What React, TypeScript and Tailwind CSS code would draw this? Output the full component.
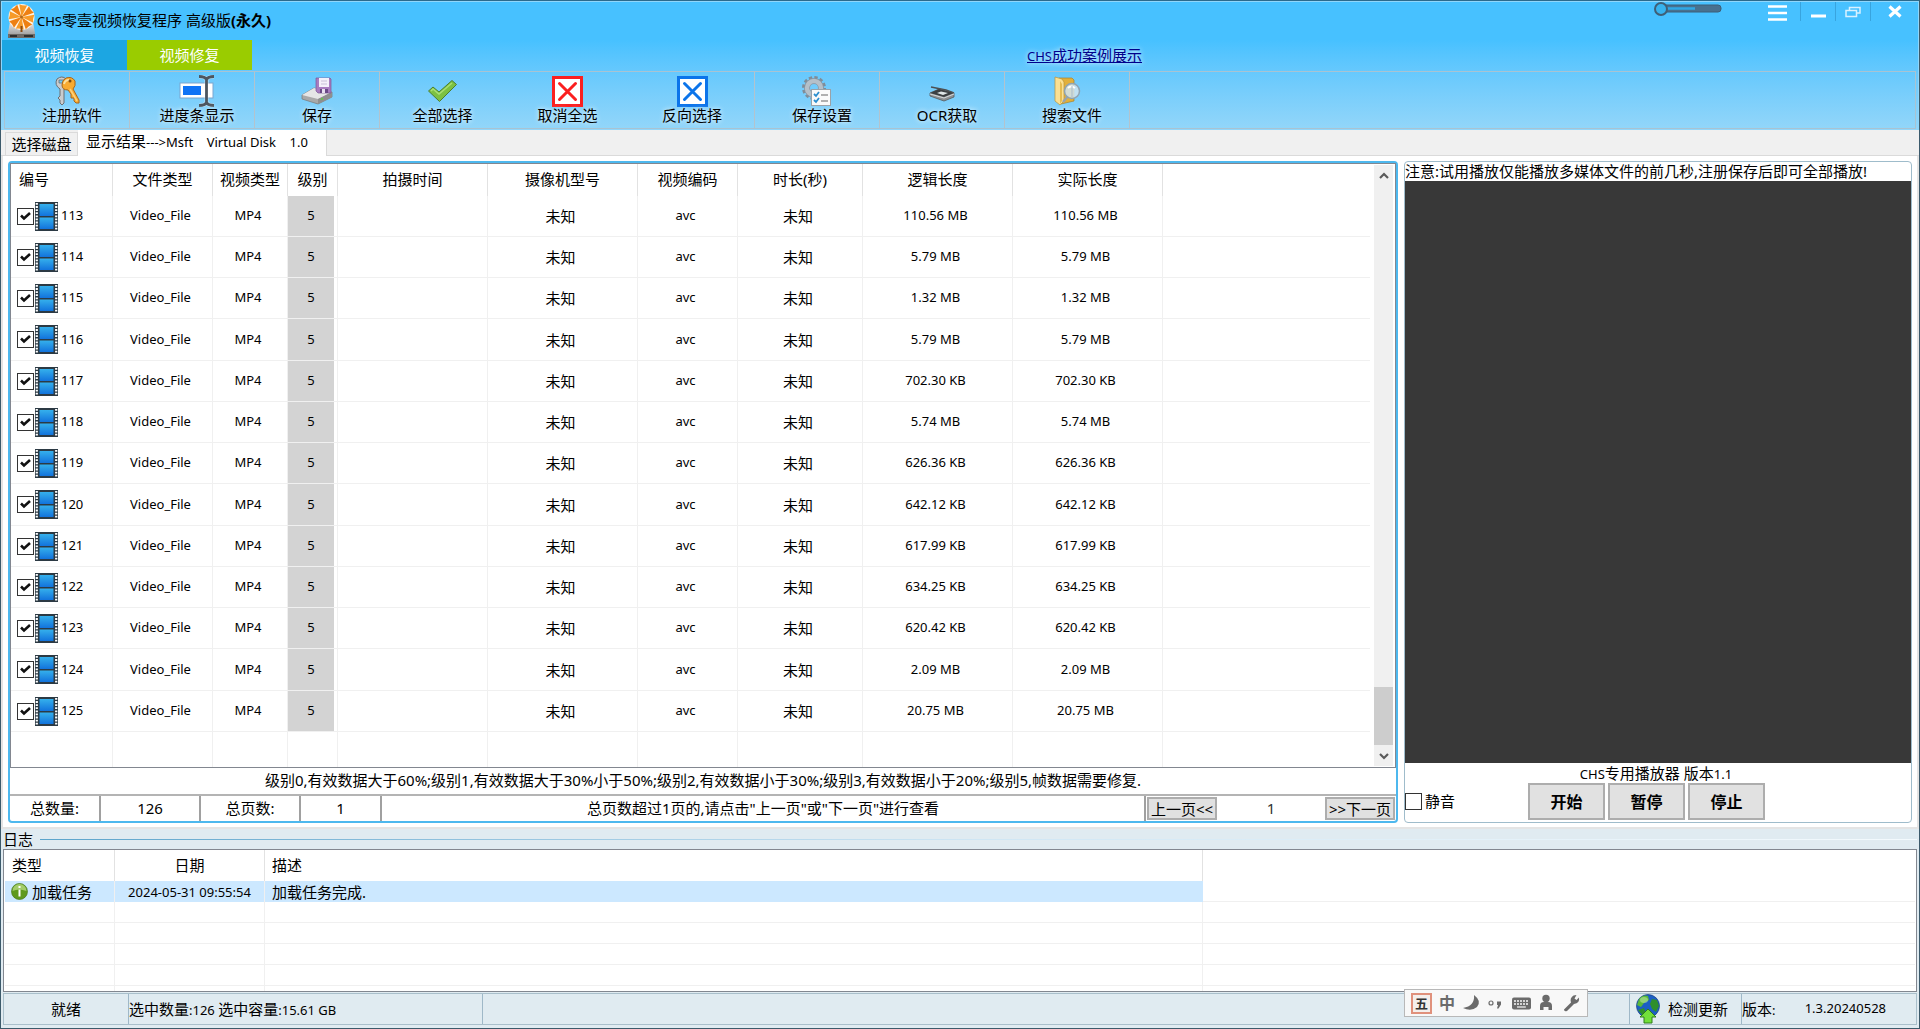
import type { ReactNode } from "react";

type Row = { id: number; size: string };

const ROWS: Row[] = [
  { id: 113, size: "110.56 MB" },
  { id: 114, size: "5.79 MB" },
  { id: 115, size: "1.32 MB" },
  { id: 116, size: "5.79 MB" },
  { id: 117, size: "702.30 KB" },
  { id: 118, size: "5.74 MB" },
  { id: 119, size: "626.36 KB" },
  { id: 120, size: "642.12 KB" },
  { id: 121, size: "617.99 KB" },
  { id: 122, size: "634.25 KB" },
  { id: 123, size: "620.42 KB" },
  { id: 124, size: "2.09 MB" },
  { id: 125, size: "20.75 MB" },
];

function Latin({ children }: { children: ReactNode }) {
  return <span className="text-[13px]">{children}</span>;
}

function LogoIcon() {
  const wedges = [0, 1, 2, 3, 4, 5, 6, 7];
  return (
    <svg width="29" height="37" viewBox="0 0 29 37" aria-hidden="true">
      <defs>
        <linearGradient id="drive" x1="0" y1="0" x2="0" y2="1">
          <stop offset="0" stopColor="#e8e8e8" />
          <stop offset="1" stopColor="#8f8f8f" />
        </linearGradient>
      </defs>
      <path d="M3 20 L26 20 L28 31 L28 36 L1 36 L1 31Z" fill="url(#drive)" />
      <path d="M1 32H28V36H1Z" fill="#6f6a66" />
      <path d="M3 34h7M17 34h9" stroke="#2f2f2f" strokeWidth="2" />
      <g transform="translate(14.5 15)">
        <circle r="13" fill="#fff4e4" />
        {wedges.map((i) => (
          <path
            key={i}
            d="M0 0 L-4 -12.4 Q0 -11.2 4 -12.4Z"
            transform={`rotate(${i * 45 + 8})`}
            fill={i % 2 ? "#ee8012" : "#f79a28"}
          />
        ))}
        <circle r="1.5" fill="#b06a1a" />
        <path d="M0 9v6" stroke="#8a4a10" strokeWidth="2" />
      </g>
    </svg>
  );
}

function KeysIcon() {
  return (
    <svg width="28" height="30" viewBox="0 0 28 30" aria-hidden="true">
      <path
        d="M4 3 Q9 -1 13 3 L14 8 Q13 12 11 13 L11 27 L9 29 L7 27 L7 24 L5 22 L7 20 L7 13 Q1 9 4 3Z"
        fill="#c9ccce"
        stroke="#6b6f73"
      />
      <path d="M6 4h5v3H6z" fill="#6bc8fb" stroke="#6b6f73" strokeWidth="0.8" />
      <path
        d="M13 2 Q19 0 22 5 Q23 10 20 13 L26 24 L26 27 L23 27 L21 25 L21 22 L18 22 L18 18 L15 14 Q9 14 9 9 Q9 4 13 2Z"
        fill="#f8ab32"
        stroke="#a8671a"
      />
      <path d="M11 8 Q12 4 16 4" stroke="#fde0a0" strokeWidth="2" fill="none" />
      <circle cx="17" cy="5" r="1.5" fill="#7a4a12" />
      <path d="M17 13 L24 25" stroke="#fcd27c" strokeWidth="1.5" />
    </svg>
  );
}

function ProgressIcon() {
  return (
    <svg width="45" height="32" viewBox="-9 0 45 32" aria-hidden="true">
      <rect x="1" y="8" width="33" height="15" fill="#fff" stroke="#7aa6cf" />
      <rect x="4" y="11" width="18" height="9" fill="#0f73f5" />
      <path
        d="M20 1.500 Q26 1.500 27.500 4.500 Q29 1.500 35 1.500 M27.500 4V28 M20 30.500 Q26 30.500 27.500 27.500 Q29 30.500 35 30.500"
        stroke="#fff"
        strokeWidth="4"
        fill="none"
        opacity="0.5"
      />
      <path
        d="M20 1.500 Q26 1.500 27.500 4.500 Q29 1.500 35 1.500 M27.500 4V28 M20 30.500 Q26 30.500 27.500 27.500 Q29 30.500 35 30.500"
        stroke="#4d565f"
        strokeWidth="2.8"
        fill="none"
      />
    </svg>
  );
}

function SaveIcon() {
  return (
    <svg width="32" height="28" viewBox="0 0 32 28" aria-hidden="true">
      <path d="M1 18 L13 11 L31 15 L31 20 L17 27 L1 22Z" fill="#a9a9a9" stroke="#777" strokeWidth="0.7" />
      <path d="M1 18 L13 11 L31 15 L17 22Z" fill="#e6e6e6" />
      <path d="M17 22 L31 15 V20 L17 27Z" fill="#8f8f8f" />
      <circle cx="21" cy="22" r="1" fill="#5ad23a" />
      <path d="M15 1 H29 L30 2 V16 H17 L15 14Z" fill="#a87cc0" stroke="#7b5796" strokeWidth="0.7" />
      <rect x="18" y="1" width="10" height="9" fill="#f4f0fa" />
      <path d="M20 4h6M20 7h6" stroke="#c9c0d8" />
      <rect x="19" y="12" width="8" height="4" fill="#6a4a86" />
      <rect x="21" y="12" width="3" height="4" fill="#e8dff0" />
    </svg>
  );
}

function CheckIcon() {
  return (
    <svg width="31" height="24" viewBox="0 0 31 24" aria-hidden="true">
      <path
        d="M1.500 12 L6 8 L12 13 L25 1.500 L29.500 5.500 L12.500 22.500Z"
        fill="#7cc142"
        stroke="#4b7f2e"
        strokeLinejoin="round"
      />
      <path d="M4 12 L6 10 L12 15 L25 4" stroke="#a9df72" strokeWidth="1.5" fill="none" />
    </svg>
  );
}

function BoxXIcon({ color }: { color: string }) {
  return (
    <svg width="31" height="31" viewBox="0 0 31 31" aria-hidden="true">
      <rect x="1.500" y="1.500" width="28" height="28" fill="#fff" stroke={color} strokeWidth="3" />
      <path
        d="M7.500 7.500 L23.500 23.500 M23.500 7.500 L7.500 23.500"
        stroke={color}
        strokeWidth="3"
        strokeLinecap="round"
      />
    </svg>
  );
}

function SettingsIcon() {
  return (
    <svg width="30" height="30" viewBox="0 0 30 30" aria-hidden="true">
      <circle cx="12" cy="12" r="10.5" fill="none" stroke="#7f8d99" strokeWidth="3" strokeDasharray="3.3 2.2" />
      <circle cx="12" cy="12" r="7" fill="none" stroke="#8593a0" strokeWidth="6" />
      <circle cx="12" cy="12" r="7" fill="none" stroke="#b5c0c9" strokeWidth="4.5" />
      <rect x="9.500" y="13.500" width="19" height="16" fill="#fafafa" stroke="#9aa2a8" />
      <path d="M12 18 l2 2 l3 -4 M12 24 l2 2 l3 -4" stroke="#2b8fd0" strokeWidth="1.8" fill="none" />
      <path d="M19 19h7M19 25h7" stroke="#b0b0b0" strokeWidth="1.8" />
    </svg>
  );
}

function ScannerIcon() {
  return (
    <svg width="26" height="22" viewBox="0 -6 26 22" aria-hidden="true">
      <path d="M2 1 L17 4 L25 7" stroke="#4b4f52" strokeWidth="1.5" fill="none" />
      <path d="M1 7 L10 3 L25 7 L25 11 L15 15 L1 10Z" fill="#8d9194" stroke="#55595c" strokeWidth="0.8" />
      <path d="M1 7 L10 3 L25 7 L15 11Z" fill="#3b3f42" />
      <path d="M8 7 L12 5.500 L19 7 L14 9Z" fill="#dfe6e8" />
      <path d="M1 8 L15 12 L25 8" stroke="#d5d8da" fill="none" />
    </svg>
  );
}

function SearchFolderIcon() {
  return (
    <svg width="28" height="30" viewBox="0 0 28 30" aria-hidden="true">
      <path d="M6 2 L19 2 L21 4 L21 25 L8 28Z" fill="#e2b03a" stroke="#a8832e" strokeWidth="0.7" />
      <path d="M2 1 L9 3 L11 6 L11 25 L7 29 L2 25Z" fill="#fbe093" stroke="#b8923a" strokeWidth="0.7" />
      <path d="M7 5 L9 8 L9 25 L7 28Z" fill="#e6bd52" />
      <path d="M15 20 L10 26" stroke="#9aa3aa" strokeWidth="2.5" />
      <circle cx="19" cy="15" r="7.5" fill="#cfe4f0" fillOpacity="0.85" stroke="#8fa3b1" strokeWidth="1.5" />
      <path d="M15 12 Q18 9 22 12" stroke="#fff" strokeWidth="2" fill="none" />
      <path d="M19 10 V21" stroke="#a9bccb" />
    </svg>
  );
}

function FilmIcon() {
  return (
    <svg width="23" height="29" viewBox="0 0 23 29" aria-hidden="true">
      <defs>
        <linearGradient id="film" x1="0" y1="0" x2="0" y2="1">
          <stop offset="0" stopColor="#35b0ec" />
          <stop offset="1" stopColor="#1273dc" />
        </linearGradient>
      </defs>
      <rect width="23" height="29" fill="#2c3a44" />
      <path d="M1.800 1V29M21.200 1V29" stroke="#fff" strokeWidth="2.2" strokeDasharray="1.8 1.3" />
      <rect x="4.500" y="2" width="14" height="12" fill="url(#film)" />
      <rect x="4.500" y="15.500" width="14" height="11.500" fill="url(#film)" />
    </svg>
  );
}

function InfoIcon() {
  return (
    <svg width="17" height="17" viewBox="0 0 17 17" aria-hidden="true">
      <circle cx="8.500" cy="8.500" r="8" fill="#5f9a1e" stroke="#4a7a1c" strokeWidth="0.7" />
      <path d="M1.500 8 A7 7 0 0 1 15.500 8 Q8 5 1.500 8Z" fill="#a3cc6a" />
      <rect x="7.500" y="6.500" width="2" height="7" fill="#fff" />
      <rect x="7.500" y="3" width="2" height="2" fill="#fff" />
    </svg>
  );
}

function GlobeIcon() {
  return (
    <svg width="26" height="30" viewBox="0 0 26 30" aria-hidden="true">
      <circle cx="13" cy="12" r="11.500" fill="#1c5fc4" stroke="#1a3f80" strokeWidth="0.7" />
      <path d="M4 5 Q8 0 13 2 L14 6 L9 9 L6 13 L2 11Z" fill="#59b83a" />
      <path d="M17 5 L22 6 L24 12 L21 18 L17 15 L15 10Z" fill="#2f8f2c" />
      <path d="M3 16 L9 14 L11 19 L8 22Z" fill="#2f8f2c" />
      <ellipse cx="9" cy="6" rx="4" ry="3" fill="#cdeeb0" opacity="0.5" />
      <path d="M13 15 L21 23 H17 V29 H9 V23 H5Z" fill="#72e03a" stroke="#2f7d1c" />
    </svg>
  );
}

function Chevron({ up }: { up?: boolean }) {
  return (
    <svg width="10" height="8" viewBox="0 0 10 8" aria-hidden="true">
      <path d={up ? "M1 6 L5 2 L9 6" : "M1 2 L5 6 L9 2"} stroke="#5a5a5a" strokeWidth="2.2" fill="none" />
    </svg>
  );
}

function Tick({ label, checked, children }: { label: string; checked?: boolean; children?: ReactNode }) {
  return (
    <label className="flex items-center">
      <span className="relative flex">
        <input
          type="checkbox"
          defaultChecked={checked}
          aria-label={label}
          className="peer size-[17px] appearance-none border border-[#333] bg-white"
        />
        <svg
          width="17"
          height="17"
          viewBox="0 0 17 17"
          className="pointer-events-none absolute inset-0 hidden peer-checked:block"
          aria-hidden="true"
        >
          <path d="M4 7.500 L7 10.500 L13 5" stroke="#111" strokeWidth="2.6" fill="none" />
        </svg>
      </span>
      {children}
    </label>
  );
}

type Tool = { label: string; icon: ReactNode; shift?: boolean; divider?: boolean };

const TOOLS: Tool[] = [
  { label: "注册软件", icon: <KeysIcon />, shift: true, divider: true },
  { label: "进度条显示", icon: <ProgressIcon />, shift: true, divider: true },
  { label: "保存", icon: <SaveIcon />, divider: true },
  { label: "全部选择", icon: <CheckIcon /> },
  { label: "取消全选", icon: <BoxXIcon color="#fb1f1f" /> },
  { label: "反向选择", icon: <BoxXIcon color="#0b74ea" />, divider: true },
  { label: "保存设置", icon: <SettingsIcon />, shift: true, divider: true },
  { label: "OCR获取", icon: <ScannerIcon />, shift: true, divider: true },
  { label: "搜索文件", icon: <SearchFolderIcon />, shift: true, divider: true },
];

const WINDOW_BUTTON = "flex h-[19px] items-center justify-center border-l border-[#38a4de]";

function TitleBar() {
  return (
    <div className="flex h-[38px] items-start">
      <div className="flex flex-1 items-center pl-[5px]">
        <LogoIcon />
        <h1 className="pl-px text-[15px] leading-5">
          <Latin>CHS</Latin>零壹视频恢复程序 高级版<b>(永久)</b>
        </h1>
      </div>
      <label className="relative mr-[45px] block">
        <svg width="70" height="14" viewBox="0 1 70 14" aria-hidden="true">
          <rect x="9" y="4" width="59" height="7" rx="3" fill="#48718f" stroke="#3c5f78" />
          <path d="M14 7.500H42" stroke="#2fa8e6" strokeWidth="2.5" />
          <circle cx="8" cy="8" r="6" fill="#37b3ee" stroke="#3f5f76" strokeWidth="2" />
        </svg>
        <input type="range" aria-label="透明度" className="absolute inset-0 w-full opacity-0" />
      </label>
      <button aria-label="菜单" className="mr-[13px] flex h-5 items-center">
        <svg width="19" height="17" viewBox="0 0 19 17" aria-hidden="true">
          <path d="M0 2.500H19M0 9H19M0 15.500H19" stroke="#fff" strokeWidth="2.5" />
        </svg>
      </button>
      <button aria-label="最小化" className={WINDOW_BUTTON + " w-[35px]"}>
        <svg width="15" height="12" viewBox="0 0 15 12" aria-hidden="true">
          <path d="M0 10H15" stroke="#fff" strokeWidth="3" />
        </svg>
      </button>
      <button aria-label="还原" className={WINDOW_BUTTON + " w-[35px]"}>
        <svg width="16" height="12" viewBox="0 0 16 12" aria-hidden="true">
          <path d="M4.500 4V1.500H15V7H12M1 4.500H11.500V10.500H1Z" stroke="#d9f1ff" strokeWidth="1.5" fill="none" />
        </svg>
      </button>
      <button aria-label="关闭" className={WINDOW_BUTTON + " w-[48px]"}>
        <svg width="14" height="13" viewBox="0 0 14 13" aria-hidden="true">
          <path d="M1.500 1.500L12.500 11.500M12.500 1.500L1.500 11.500" stroke="#fff" strokeWidth="3.2" />
        </svg>
      </button>
    </div>
  );
}

function Ribbon() {
  return (
    <>
      <div className="flex h-[31px] items-start text-[15px]">
        <button className="h-[30px] w-[125px] bg-[#1ca6e2] text-white">视频恢复</button>
        <button className="h-[30px] w-[125px] bg-[#9acc00] text-white">视频修复</button>
        <a href="#cases" className="ml-[775px] pt-1 text-[#00008b] underline [text-shadow:0_0_5px_#fff]">
          <Latin>CHS</Latin>成功案例展示
        </a>
      </div>
      <div className="mx-[2px] flex h-[58px] border border-[#a9c3d2]">
        {TOOLS.map((t) => (
          <button
            key={t.label}
            className={
              "flex w-[125px] flex-col items-center text-[15px] leading-[18px] [text-shadow:0_0_5px_#fff] " +
              (t.divider ? "border-r border-[#b3c3cd]" : "")
            }
          >
            <span className="flex h-[34px] items-center justify-center pt-1">{t.icon}</span>
            <span className={t.shift ? "pl-[10px]" : ""}>{t.label}</span>
          </button>
        ))}
      </div>
    </>
  );
}

const HEAD = "border-r border-[#e2e2e2] p-0 pb-[2px] font-normal";
const CELL = "border-r border-b border-[#f0f0f0] p-0 text-center";

function FileTable() {
  return (
    <table className="w-full table-fixed border-separate border-spacing-0 text-[13px]">
      <colgroup>
        <col className="w-[102px]" />
        <col className="w-[100px]" />
        <col className="w-[75px]" />
        <col className="w-[50px]" />
        <col className="w-[150px]" />
        <col className="w-[150px]" />
        <col className="w-[100px]" />
        <col className="w-[125px]" />
        <col className="w-[150px]" />
        <col className="w-[150px]" />
        <col />
      </colgroup>
      <thead>
        <tr className="h-8 text-[15px]">
          <th className={HEAD + " pl-2 text-left"}>编号</th>
          <th className={HEAD}>文件类型</th>
          <th className={HEAD}>视频类型</th>
          <th className={HEAD}>级别</th>
          <th className={HEAD}>拍摄时间</th>
          <th className={HEAD}>摄像机型号</th>
          <th className={HEAD}>视频编码</th>
          <th className={HEAD}>时长(秒)</th>
          <th className={HEAD}>逻辑长度</th>
          <th className={HEAD}>实际长度</th>
          <th className="p-0" />
        </tr>
      </thead>
      <tbody>
        {ROWS.map((r) => (
          <tr key={r.id} className="h-[41px] nth-[4n]:h-[42px]">
            <td className={CELL}>
              <div className="pl-[6px]">
                <Tick label={String(r.id)} checked>
                  <span className="ml-px flex">
                    <FilmIcon />
                  </span>
                  <span className="ml-[3px]">{r.id}</span>
                </Tick>
              </div>
            </td>
            <td className={CELL + " pr-1"}>Video_File</td>
            <td className={CELL + " pr-1"}>MP4</td>
            <td className={CELL + " bg-[#d3d3d3] pr-[3px] shadow-[inset_-3px_0_0_#fff]"}>5</td>
            <td className={CELL} />
            <td className={CELL + " pr-1 text-[15px] leading-5"}>未知</td>
            <td className={CELL + " pr-1"}>avc</td>
            <td className={CELL + " pr-1 text-[15px] leading-5"}>未知</td>
            <td className={CELL + " pr-1"}>{r.size}</td>
            <td className={CELL + " pr-1"}>{r.size}</td>
            <td className="border-b border-[#f0f0f0] p-0" />
          </tr>
        ))}
        <tr className="h-[60px]">
          {[0, 1, 2, 3, 4, 5, 6, 7, 8, 9].map((i) => (
            <td key={i} className={CELL} />
          ))}
          <td className="p-0" />
        </tr>
      </tbody>
    </table>
  );
}

const BAR_CELL = "flex items-center justify-center border-r-2 border-[#a0a0a0]";
const PAGE_BUTTON = "h-[23px] w-[70px] border-2 border-[#adadad] bg-[#e1e1e1] leading-[18px] whitespace-nowrap";

function ResultPanel() {
  return (
    <section className="flex min-w-0 flex-1 flex-col rounded-sm border-2 border-[#4db8ee] bg-white">
      <div className="flex min-h-0 flex-1 border border-[#828790]">
        <div className="min-w-0 flex-1 overflow-hidden">
          <FileTable />
        </div>
        <div className="my-px mr-[2px] ml-1 flex w-[19px] flex-col items-center bg-[#f0f0f0]">
          <button aria-label="向上滚动" className="flex h-[22px] w-full items-center justify-center">
            <Chevron up />
          </button>
          <div className="flex-1" />
          <div className="h-[58px] w-full bg-[#cdcdcd]" />
          <button aria-label="向下滚动" className="flex h-[21px] w-full items-center justify-center">
            <Chevron />
          </button>
        </div>
      </div>
      <p className="flex h-[26px] items-center justify-center pb-px text-[15px]">
        级别0,有效数据大于60%;级别1,有效数据大于30%小于50%;级别2,有效数据小于30%;级别3,有效数据小于20%;级别5,帧数据需要修复.
      </p>
      <div className="flex h-[27px] border-t-2 border-[#b4b4b4] text-[15px]">
        <div className={BAR_CELL + " w-[91px]"}>总数量:</div>
        <div className={BAR_CELL + " w-[100px]"}>126</div>
        <div className={BAR_CELL + " w-[100px]"}>总页数:</div>
        <div className={BAR_CELL + " w-[81px]"}>1</div>
        <div className={BAR_CELL + " flex-1"}>总页数超过1页的,请点击"上一页"或"下一页"进行查看</div>
        <div className="flex w-[250px] items-center justify-between px-px">
          <button className={PAGE_BUTTON}>上一页&lt;&lt;</button>
          <span className="text-[#333]">1</span>
          <button className={PAGE_BUTTON}>&gt;&gt;下一页</button>
        </div>
      </div>
    </section>
  );
}

const PLAY_BUTTON = "h-[37px] w-[77px] border-2 border-[#adadad] bg-[#e1e1e1] text-base font-bold";

function PlayerPanel() {
  return (
    <section className="flex w-[508px] flex-col rounded-sm border border-[#9fbccb] bg-white text-[15px]">
      <p className="h-[19px] leading-[18px] whitespace-nowrap">
        注意:试用播放仅能播放多媒体文件的前几秒,注册保存后即可全部播放!
      </p>
      <div className="flex-1 bg-[#383838]" />
      <p className="h-5 pr-1 text-center leading-[20px]">
        <Latin>CHS</Latin>专用播放器 版本<Latin>1.1</Latin>
      </p>
      <div className="flex h-[39px] items-start">
        <div className="flex h-9 w-[123px] items-center">
          <Tick label="静音">
            <span className="pl-[3px]">静音</span>
          </Tick>
        </div>
        <div className="flex gap-[3px]">
          <button className={PLAY_BUTTON}>开始</button>
          <button className={PLAY_BUTTON}>暂停</button>
          <button className={PLAY_BUTTON}>停止</button>
        </div>
      </div>
    </section>
  );
}

function LogPanel() {
  const head = "border-r border-[#e2e2e2] p-0 font-normal";
  const line = "border-b border-[#f0f0f0] p-0";
  return (
    <section className="px-[2px]">
      <div className="flex h-5 items-center text-[15px] leading-5">
        <h2>日志</h2>
        <div className="ml-[7px] h-px flex-1 bg-linear-to-r from-[#5ba4cb] via-[#cfe6f4] to-[#f4fafd]" />
      </div>
      <div className="h-[143px] overflow-hidden border border-[#828790] bg-white px-px">
        <table className="w-full table-fixed border-separate border-spacing-0 text-[15px]">
          <colgroup>
            <col className="w-[110px]" />
            <col className="w-[150px]" />
            <col className="w-[938px]" />
            <col />
          </colgroup>
          <thead>
            <tr className="h-[31px]">
              <th className={head + " pl-[7px] text-left"}>类型</th>
              <th className={head}>日期</th>
              <th className={head + " pl-[7px] text-left"}>描述</th>
              <th className="p-0" />
            </tr>
          </thead>
          <tbody>
            <tr className="h-[21px] leading-5">
              <td className="border-r border-[#f0f0f0] bg-[#cce8ff] p-0">
                <span className="flex items-center gap-1 pl-[6px]">
                  <InfoIcon />
                  加载任务
                </span>
              </td>
              <td className="border-r border-[#f0f0f0] bg-[#cce8ff] p-0 text-center text-[13px]">
                2024-05-31 09:55:54
              </td>
              <td className="bg-[#cce8ff] p-0 pl-[7px]">加载任务完成.</td>
              <td className={line} />
            </tr>
            {[0, 1, 2, 3, 4].map((i) => (
              <tr key={i} className="h-[21px]">
                <td className={line + " border-r"} />
                <td className={line + " border-r"} />
                <td className={line + " border-r"} />
                <td className={line} />
              </tr>
            ))}
          </tbody>
        </table>
      </div>
    </section>
  );
}

function ImeBar() {
  return (
    <div className="absolute right-[331px] bottom-[11px] flex h-[28px] w-[184px] items-center border border-[#b8b8b8] bg-[#f8f8f8] pl-[6px] text-[#6b6b6b]">
      <span className="flex size-[21px] items-center justify-center border-2 border-[#e0917c] bg-[#f4efec] text-[13px] leading-4 font-bold text-[#333]">
        五
      </span>
      <span className="w-[30px] text-center text-base leading-5 font-bold">中</span>
      <svg width="120" height="20" viewBox="0 0 120 20" aria-hidden="true" fill="#6b6b6b">
        <path d="M12 2 Q20 8 15 14 Q9 19 1 15 Q13 13 12 2Z" />
        <circle cx="29" cy="10" r="2" fill="none" stroke="#6b6b6b" strokeWidth="1.2" />
        <path d="M35 8.500h4v3l-2.500 4h-1.500l1 -3.500h-1z" />
        <rect x="50" y="4.500" width="19" height="12" rx="2" />
        <path d="M52 8h15M52 11h15" stroke="#f8f8f8" strokeWidth="1.3" strokeDasharray="2 1" />
        <path d="M55 14h9" stroke="#f8f8f8" strokeWidth="1.2" />
        <circle cx="84" cy="5.500" r="3.7" />
        <path d="M78 17 V13 Q78 9 82 9 H86 Q90 9 90 13 V17 H86.500 V14 H81.500 V17Z" />
        <path d="M102 16.500 L109 9.500 Q107.500 5 111.500 2.500 L114.500 2 L112.500 5.500 L114.500 7 L117 4.500 Q118 10 112 11 L105 18 Q102 19 102 16.500Z" />
      </svg>
    </div>
  );
}

function StatusBar() {
  const edge = "border-r border-[#9fb8c8]";
  return (
    <footer className="mx-[2px] mt-px mb-[3px] flex h-8 items-stretch border border-[#a9bfcb] text-[15px]">
      <div className={"flex w-[125px] items-center justify-center " + edge}>就绪</div>
      <div className={"w-[354px] leading-[30px] " + edge}>
        选中数量<Latin>:126 </Latin>选中容量<Latin>:15.61 GB</Latin>
      </div>
      <div className={"flex-1 " + edge} />
      <div className={"flex w-[112px] items-center pl-[5px] " + edge}>
        <button className="flex items-center gap-[7px]">
          <GlobeIcon />
          检测更新
        </button>
      </div>
      <div className="flex w-[174px] items-center justify-between pr-[30px]">
        <span>
          版本<Latin>:</Latin>
        </span>
        <Latin>1.3.20240528</Latin>
      </div>
    </footer>
  );
}

export default function App() {
  return (
    <div className="relative flex h-screen min-h-[600px] flex-col overflow-hidden border border-[#3c5a6b] border-t-[#2b6a8c] bg-[#e0ebf1] font-['Noto_Sans','Noto_Sans_CJK_SC',sans-serif] text-black">
      <header className="border-x border-t border-[#8fd6fb] bg-linear-to-b from-[#47c1ff] from-30% to-[#93d6f9] pb-px">
        <TitleBar />
        <Ribbon />
      </header>
      <main className="flex min-h-0 flex-1 flex-col">
        <div className="flex h-[26px] items-end border-b border-[#dadada] bg-[#f0f0f0] pl-1 text-[15px]">
          <button className="h-[23px] w-[73px] border border-b-0 border-[#dadada] text-center leading-[22px]">
            选择磁盘
          </button>
          <button className="-mb-px h-[26px] w-[249px] border-r border-[#dadada] bg-white pb-1 pl-2 text-left leading-[22px] whitespace-pre">
            显示结果<Latin>{"---\u003eMsft    Virtual Disk    1.0"}</Latin>
          </button>
        </div>
        <div className="flex min-h-0 flex-1 gap-[6px] border-x-2 border-b-2 border-[#e4e4e4] bg-white pt-[5px] pr-[5px] pb-[4px] pl-[5px]">
          <ResultPanel />
          <PlayerPanel />
        </div>
      </main>
      <LogPanel />
      <StatusBar />
      <ImeBar />
    </div>
  );
}
